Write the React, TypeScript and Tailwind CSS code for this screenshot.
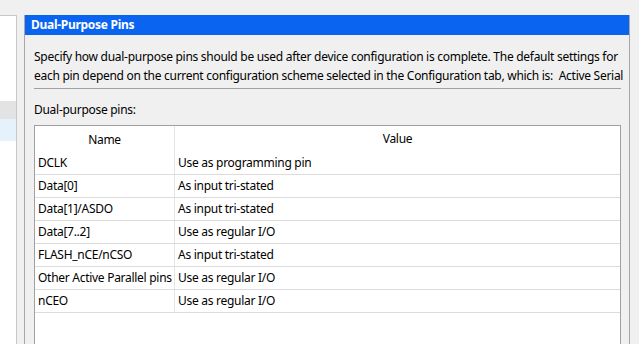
const pins = [
  ["DCLK", "Use as programming pin"],
  ["Data[0]", "As input tri-stated"],
  ["Data[1]/ASDO", "As input tri-stated"],
  ["Data[7..2]", "Use as regular I/O"],
  ["FLASH_nCE/nCSO", "As input tri-stated"],
  ["Other Active Parallel pins", "Use as regular I/O"],
  ["nCEO", "Use as regular I/O"],
];

export default function App() {
  return (
    <div
      className="w-[639px] h-[344px] bg-[#f0f0f0] flex overflow-hidden text-[12px] text-black tracking-[-0.28px]"
      style={{ fontFamily: '"Noto Sans", "Open Sans", sans-serif' }}
    >
      {/* left tree strip */}
      <div className="w-[17px] mt-[15px] bg-white border-t border-r border-[#c8c8c8] shrink-0">
        <div className="h-[85px]" />
        <div className="h-[18px] bg-[#e3e3e3]" />
        <div className="h-[22px] bg-[#e5f1fb]" />
      </div>

      {/* main panel */}
      <div className="ml-[7px] mt-[15px] w-[606px] shrink-0 border-l border-r border-[#a8a8a8] flex flex-col">
        <div className="h-[20px] bg-[#0a64f0] text-white font-bold pl-[6px] leading-[20px]">
          Dual-Purpose Pins
        </div>

        <div className="pl-[9px] pr-[8px] flex flex-col">
          <div className="pt-[12px] leading-[19px] whitespace-nowrap">
            <div>
              Specify how dual-purpose pins should be used after device configuration is complete. The default settings for
            </div>
            <div>
              each pin depend on the current configuration scheme selected in the Configuration tab, which is:&nbsp; Active Serial
            </div>
          </div>
          <div className="mt-[3px] h-px bg-[#a0a0a0]" />
          <div className="mt-[12px] leading-[18px]">Dual-purpose pins:</div>

          <div className="mt-[6px] w-[587px] h-[240px] bg-white border-t border-l border-r border-[#a0a0a0]">
            <div className="flex h-[26px] items-center">
              <div className="w-[140px] text-center border-r border-[#e4e4e4] h-full leading-[28px]">Name</div>
              <div className="flex-1 text-center leading-[28px]">Value</div>
            </div>
            {pins.map(([name, value]) => (
              <div key={name} className="flex h-[23px] border-b border-[#dcdcdc]">
                <div className="w-[140px] pl-[3px] border-r border-[#e4e4e4] leading-[22px] whitespace-nowrap">
                  {name}
                </div>
                <div className="flex-1 pl-[3px] leading-[22px]">{value}</div>
              </div>
            ))}
          </div>
        </div>
      </div>
    </div>
  );
}
